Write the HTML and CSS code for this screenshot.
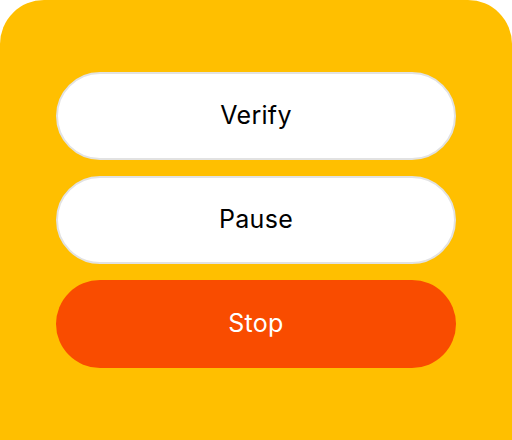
FILE: index.html
```html
<!DOCTYPE html>
<html>
<head>
<meta charset="utf-8">
<link rel="stylesheet" href="styles.css">
</head>
<body>
<div class="panel">
  <button class="btn btn-light">Verify</button>
  <button class="btn btn-light">Pause</button>
  <button class="btn btn-danger">Stop</button>
</div>
</body>
</html>
```
FILE: styles.css
```css
html, body {
  margin: 0;
  padding: 0;
  background: #ffffff;
}
.panel {
  background: #ffbf00;
  border-radius: 44px 44px 0 0;
  height: 440px;
  box-sizing: border-box;
  padding: 72px 56px 0;
  display: flex;
  flex-direction: column;
  gap: 16px;
}
.btn {
  height: 88px;
  width: 400px;
  border-radius: 44px;
  font-family: Inter, "Noto Sans", sans-serif;
  font-size: 25px;
  font-weight: 400;
  letter-spacing: 0.3px;
  box-sizing: border-box;
  cursor: pointer;
  padding: 0 0 2px;
}
.btn-light {
  background: #ffffff;
  color: #000000;
  border: 2px solid #e2e2e2;
}
.btn-danger {
  background: #f94c00;
  color: #ffffff;
  border: none;
}
```
